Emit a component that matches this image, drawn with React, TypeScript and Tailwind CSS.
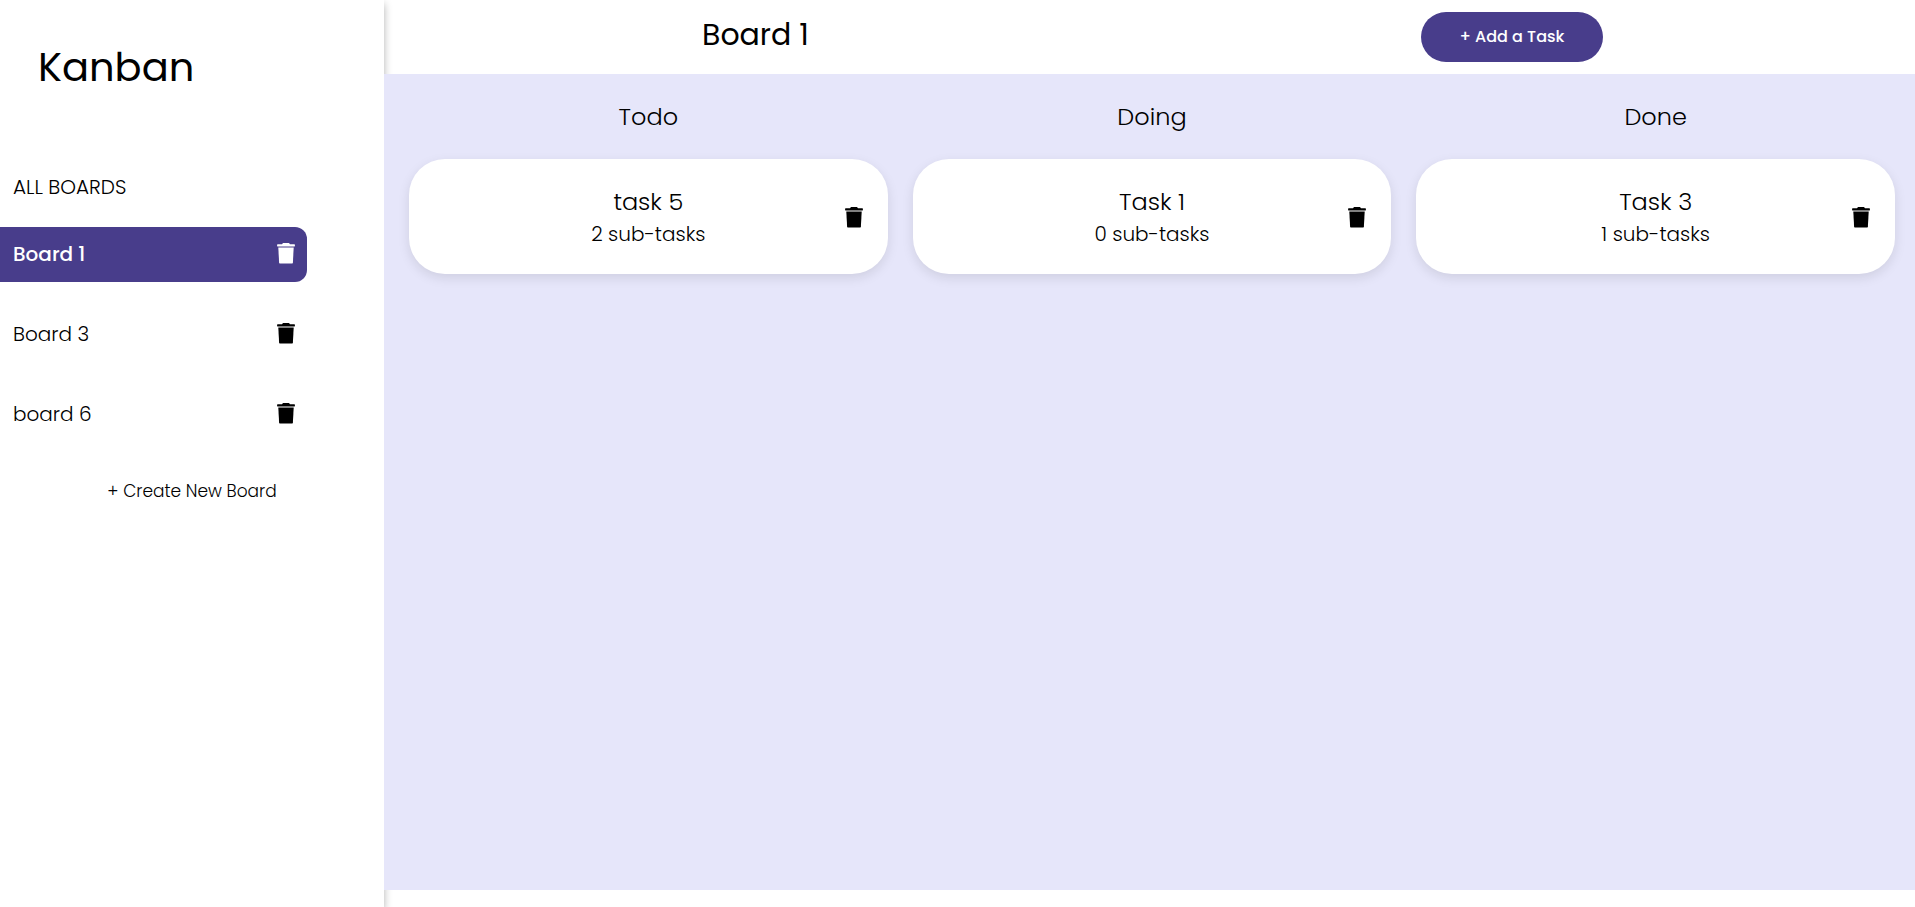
import { useState } from "react";

type Task = { title: string; subtasks: number };
type Column = { name: string; tasks: Task[] };

const boards = ["Board 1", "Board 3", "board 6"];

const columns: Column[] = [
  { name: "Todo", tasks: [{ title: "task 5", subtasks: 2 }] },
  { name: "Doing", tasks: [{ title: "Task 1", subtasks: 0 }] },
  { name: "Done", tasks: [{ title: "Task 3", subtasks: 1 }] },
];

function DeleteButton({ label }: { label: string }) {
  return (
    <button type="button" aria-label={label} className="shrink-0 cursor-pointer">
      <svg viewBox="0 0 18 21" fill="currentColor" aria-hidden="true" className="h-[21px] w-[18px]">
        <path d="M5 1.2 6 .1h6l1 1.1h4.3q.6 0 .6.6v1.3q0 .4-.4.4H.5q-.4 0-.4-.4V1.8q0-.6.6-.6z" />
        <path d="M1.3 4.6h15.4l-.8 14.8q-.1 1.2-1.3 1.2H3.4q-1.2 0-1.3-1.2z" />
      </svg>
    </button>
  );
}

function Sidebar({ active, onSelect }: { active: string; onSelect: (name: string) => void }) {
  return (
    <aside className="flex w-96 shrink-0 flex-col bg-white shadow-[0_4px_8px_rgba(0,0,0,0.3)]">
      <h1 className="mt-[37px] pl-[38px] text-[40px] leading-15 font-normal">Kanban</h1>
      <h2 className="mt-[74px] pl-[13px] text-[20px] leading-8">ALL BOARDS</h2>
      <ul className="mt-6 flex flex-col gap-[25px]">
        {boards.map((name) => (
          <li
            key={name}
            className={
              name === active
                ? "flex h-[55px] w-4/5 items-center rounded-r-xl bg-[#483d8b] pr-3 pb-0.5 pl-[13px] font-medium text-white"
                : "flex h-[55px] w-4/5 items-center rounded-r-xl pr-3 pb-0.5 pl-[13px]"
            }
          >
            <button
              type="button"
              onClick={() => onSelect(name)}
              className="flex-1 cursor-pointer text-left text-[20px] leading-8"
            >
              {name}
            </button>
            <DeleteButton label={`Delete ${name}`} />
          </li>
        ))}
      </ul>
      <button type="button" className="mt-[37px] cursor-pointer self-center text-[17px] leading-6">
        + Create New Board
      </button>
    </aside>
  );
}

function TaskCard({ task }: { task: Task }) {
  return (
    <article className="grid h-[115px] grid-cols-[1fr_auto_1fr] items-center rounded-[36px] bg-white px-[25px] pt-0.5 shadow-[0_4px_12px_rgba(0,0,0,0.1)]">
      <div className="col-start-2 text-center">
        <h3 className="text-[24px] leading-8">{task.title}</h3>
        <p className="text-[20px] leading-8">{task.subtasks} sub-tasks</p>
      </div>
      <div className="flex justify-end">
        <DeleteButton label={`Delete ${task.title}`} />
      </div>
    </article>
  );
}

export default function App() {
  const [active, setActive] = useState("Board 1");

  return (
    <div className="flex min-h-screen bg-white font-['Poppins','Inter',sans-serif] font-light text-black">
      <Sidebar active={active} onSelect={setActive} />
      <div className="flex min-w-0 flex-1 flex-col pb-[17px]">
        <header className="flex h-[74px] items-center justify-around pr-1.5">
          <h2 className="pb-1 pl-3 text-[30px] leading-10 font-normal">{active}</h2>
          <button
            type="button"
            className="h-[50px] w-[182px] cursor-pointer rounded-[25px] bg-[#483d8b] text-base font-medium text-white"
          >
            + Add a Task
          </button>
        </header>
        <main className="relative grid flex-1 grid-cols-3 gap-[25px] bg-[#e6e6fa] pr-5 pl-[25px]">
          {columns.map((column) => (
            <section key={column.name} className="flex min-w-0 flex-col">
              <h3 className="mt-[25px] mb-6 text-center text-[24px] leading-9">{column.name}</h3>
              {column.tasks.map((task) => (
                <TaskCard key={task.title} task={task} />
              ))}
            </section>
          ))}
        </main>
      </div>
    </div>
  );
}
